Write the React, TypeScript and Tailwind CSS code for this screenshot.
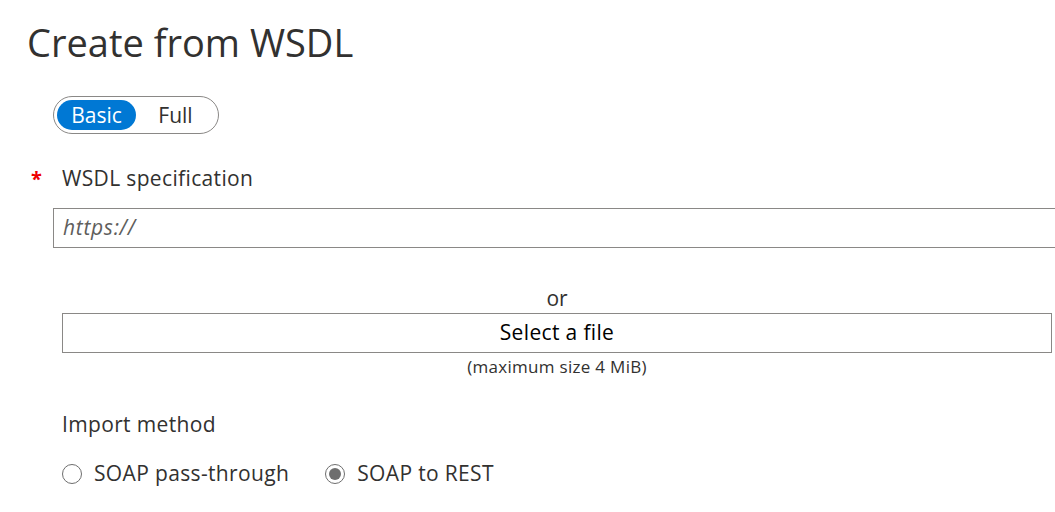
import { useState } from "react";

const FONT = { fontFamily: '"Open Sans", "Noto Sans", sans-serif' };

export default function App() {
  const [mode, setMode] = useState<"basic" | "full">("basic");
  const [method, setMethod] = useState<"pass" | "rest">("rest");

  return (
    <div className="w-[1055px] h-[512px] overflow-hidden bg-white text-[#323130]" style={FONT}>
      <h1 className="pl-[27px] pt-[18px] text-[38px] leading-[48px] font-normal text-[#323130]">
        Create from WSDL
      </h1>

      {/* Basic / Full toggle */}
      <div className="pl-[53px] mt-[30px]">
        <div className="inline-flex items-center h-[38px] rounded-full border border-[#8a8886] p-[3px] w-[166px]">
          <button
            onClick={() => setMode("basic")}
            className={`h-[30px] w-[79px] rounded-full text-[21px] leading-none ${
              mode === "basic" ? "bg-[#0078d4] text-white" : "text-[#323130]"
            }`}
          >
            Basic
          </button>
          <button
            onClick={() => setMode("full")}
            className={`h-[30px] w-[79px] rounded-full text-[21px] leading-none ${
              mode === "full" ? "bg-[#0078d4] text-white" : "text-[#323130]"
            }`}
          >
            Full
          </button>
        </div>
      </div>

      {/* WSDL spec */}
      <div className="flex items-center mt-[32px] h-[26px]">
        <span className="w-[62px] pl-[31px] text-[#e00] text-[20px] font-bold leading-none">*</span>
        <span className="text-[21px] tracking-[0.35px]">WSDL specification</span>
      </div>
      <div className="pl-[53px] mt-[16px]">
        <div className="w-[1020px] h-[40px] border border-[#8a8886] flex items-center px-[9px]">
          <span className="italic text-[21px] tracking-[0.7px] text-[#605e5c]">https://</span>
        </div>
      </div>

      <div className="pl-[62px] pr-[3px] mt-[37px]">
        <div className="w-[990px] text-center text-[21px] leading-[26px]">or</div>
        <button className="w-[990px] h-[40px] mt-[2px] border border-[#8a8886] text-[21px] tracking-[0.35px] text-black">
          Select a file
        </button>
        <div className="w-[990px] text-center text-[17px] tracking-[0.3px] leading-[20px] mt-[4px] text-[#323130]">
          (maximum size 4 MiB)
        </div>

        <div className="mt-[34px] text-[21px] tracking-[0.35px] leading-[26px]">Import method</div>

        <div className="flex items-center gap-[36px] mt-[21px]">
          <Radio label="SOAP pass-through" checked={method === "pass"} onClick={() => setMethod("pass")} />
          <Radio label="SOAP to REST" checked={method === "rest"} onClick={() => setMethod("rest")} />
        </div>
      </div>
    </div>
  );
}

function Radio({ label, checked, onClick }: { label: string; checked: boolean; onClick: () => void }) {
  return (
    <button onClick={onClick} className="flex items-center gap-[12px] text-[21px] tracking-[0.35px] text-[#323130]">
      <span className="w-[20px] h-[20px] rounded-full border border-[#6e6e6e] flex items-center justify-center">
        {checked && <span className="w-[12px] h-[12px] rounded-full bg-[#6e6e6e]" />}
      </span>
      {label}
    </button>
  );
}
